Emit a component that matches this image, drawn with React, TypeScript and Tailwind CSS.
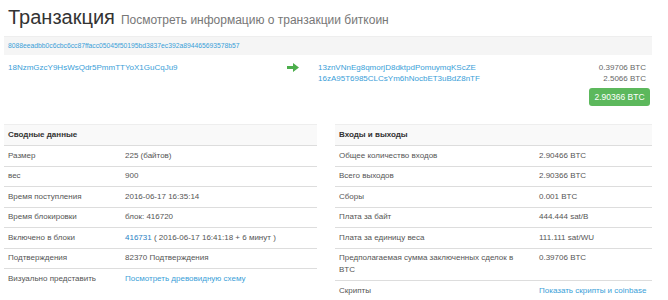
export default function App() {
  const summary: [string, React.ReactNode][] = [
    ["Размер", "225 (байтов)"],
    ["вес", "900"],
    ["Время поступления", "2016-06-17 16:35:14"],
    ["Время блокировки", "блок: 416720"],
    [
      "Включено в блоки",
      <>
        <a className="text-[#2a7fc4]">416731</a> ( 2016-06-17 16:41:18 + 6 минут )
      </>,
    ],
    ["Подтверждения", "82370 Подтверждения"],
    ["Визуально представить", <a className="text-[#3aa0d8]">Посмотреть древовидную схему</a>],
  ];

  const io: [string, React.ReactNode][] = [
    ["Общее количество входов", "2.90466 BTC"],
    ["Всего выходов", "2.90366 BTC"],
    ["Сборы", "0.001 BTC"],
    ["Плата за байт", "444.444 sat/B"],
    ["Плата за единицу веса", "111.111 sat/WU"],
    ["Предполагаемая сумма заключенных сделок в BTC", "0.39706 BTC"],
    ["Скрипты", <a className="text-[#3aa0d8]">Показать скрипты и coinbase</a>],
  ];

  return (
    <div className="w-[668px] h-[300px] overflow-hidden bg-white font-[family-name:'Liberation_Sans',Arial,sans-serif] text-[#555]">
      <div className="w-[656px] px-[4px]">
        {/* Заголовок */}
        <div className="flex items-baseline pl-[4px] pt-[5px] h-[32px]">
          <h1 className="text-[20px] leading-[24px] text-[#333]">Транзакция</h1>
          <span className="ml-[6px] text-[12px] text-[#777]">Посмотреть информацию о транзакции биткоин</span>
        </div>

        {/* Хэш */}
        <div className="mt-[4px] h-[19px] bg-[#f5f5f5] border-t border-[#eee] flex items-center px-[4px] text-[6.75px] text-[#3aa0d8]">
          8088eeadbb0c6cbc6cc87ffacc05045f50195bd3837ec392a894465693578b57
        </div>

        {/* Входы -> выходы */}
        <div className="flex h-[69px] pt-[7px] text-[8px] leading-[11px]">
          <div className="w-[279px] pl-[4px] text-[#3aa0d8]">18NzmGzcY9HsWsQdr5PmmTTYoX1GuCqJu9</div>
          <div className="w-[35px] pt-[1px]">
            <svg width="12" height="9" viewBox="0 0 12 9" className="ml-[4px]">
              <path d="M0 3h6V0l6 4.5L6 9V6H0z" fill="#4cae4c" />
            </svg>
          </div>
          <div className="flex-1 text-[#3aa0d8]">
            <div>13znVNnEg8qmorjD8dktpdPomuymqKScZE</div>
            <div>16zA95T6985CLCsYm6hNocbET3uBdZ8nTF</div>
          </div>
          <div className="flex flex-col items-end pr-[6px] text-[#666]">
            <div>0.39706 BTC</div>
            <div>2.5066 BTC</div>
            <div className="mt-[4px] -mr-[4px] h-[18px] w-[61px] rounded-[3px] bg-[#5cb85c] text-white text-[8.5px] flex items-center justify-center">
              2.90366 BTC
            </div>
          </div>
        </div>

        {/* Таблицы */}
        <div className="grid grid-cols-[313px_317px] gap-[18px] text-[8px] leading-[12px]">
          <Table title="Сводные данные" rows={summary} labelW="w-[117px]" />
          <Table title="Входы и выходы" rows={io} labelW="w-[200px]" />
        </div>
      </div>
    </div>
  );
}

function Table({ title, rows, labelW }: { title: string; rows: [string, React.ReactNode][]; labelW: string }) {
  return (
    <div>
      <div className="bg-[#f9f9f9] border-t border-[#eee] px-[4px] py-[4px] font-bold text-[#333]">{title}</div>
      {rows.map(([k, v], i) => (
        <div key={i} className="flex border-t border-[#ddd] px-[4px] py-[3.75px]">
          <div className={`${labelW} shrink-0 pr-[12px]`}>{k}</div>
          <div className="flex-1 whitespace-nowrap">{v}</div>
        </div>
      ))}
    </div>
  );
}
